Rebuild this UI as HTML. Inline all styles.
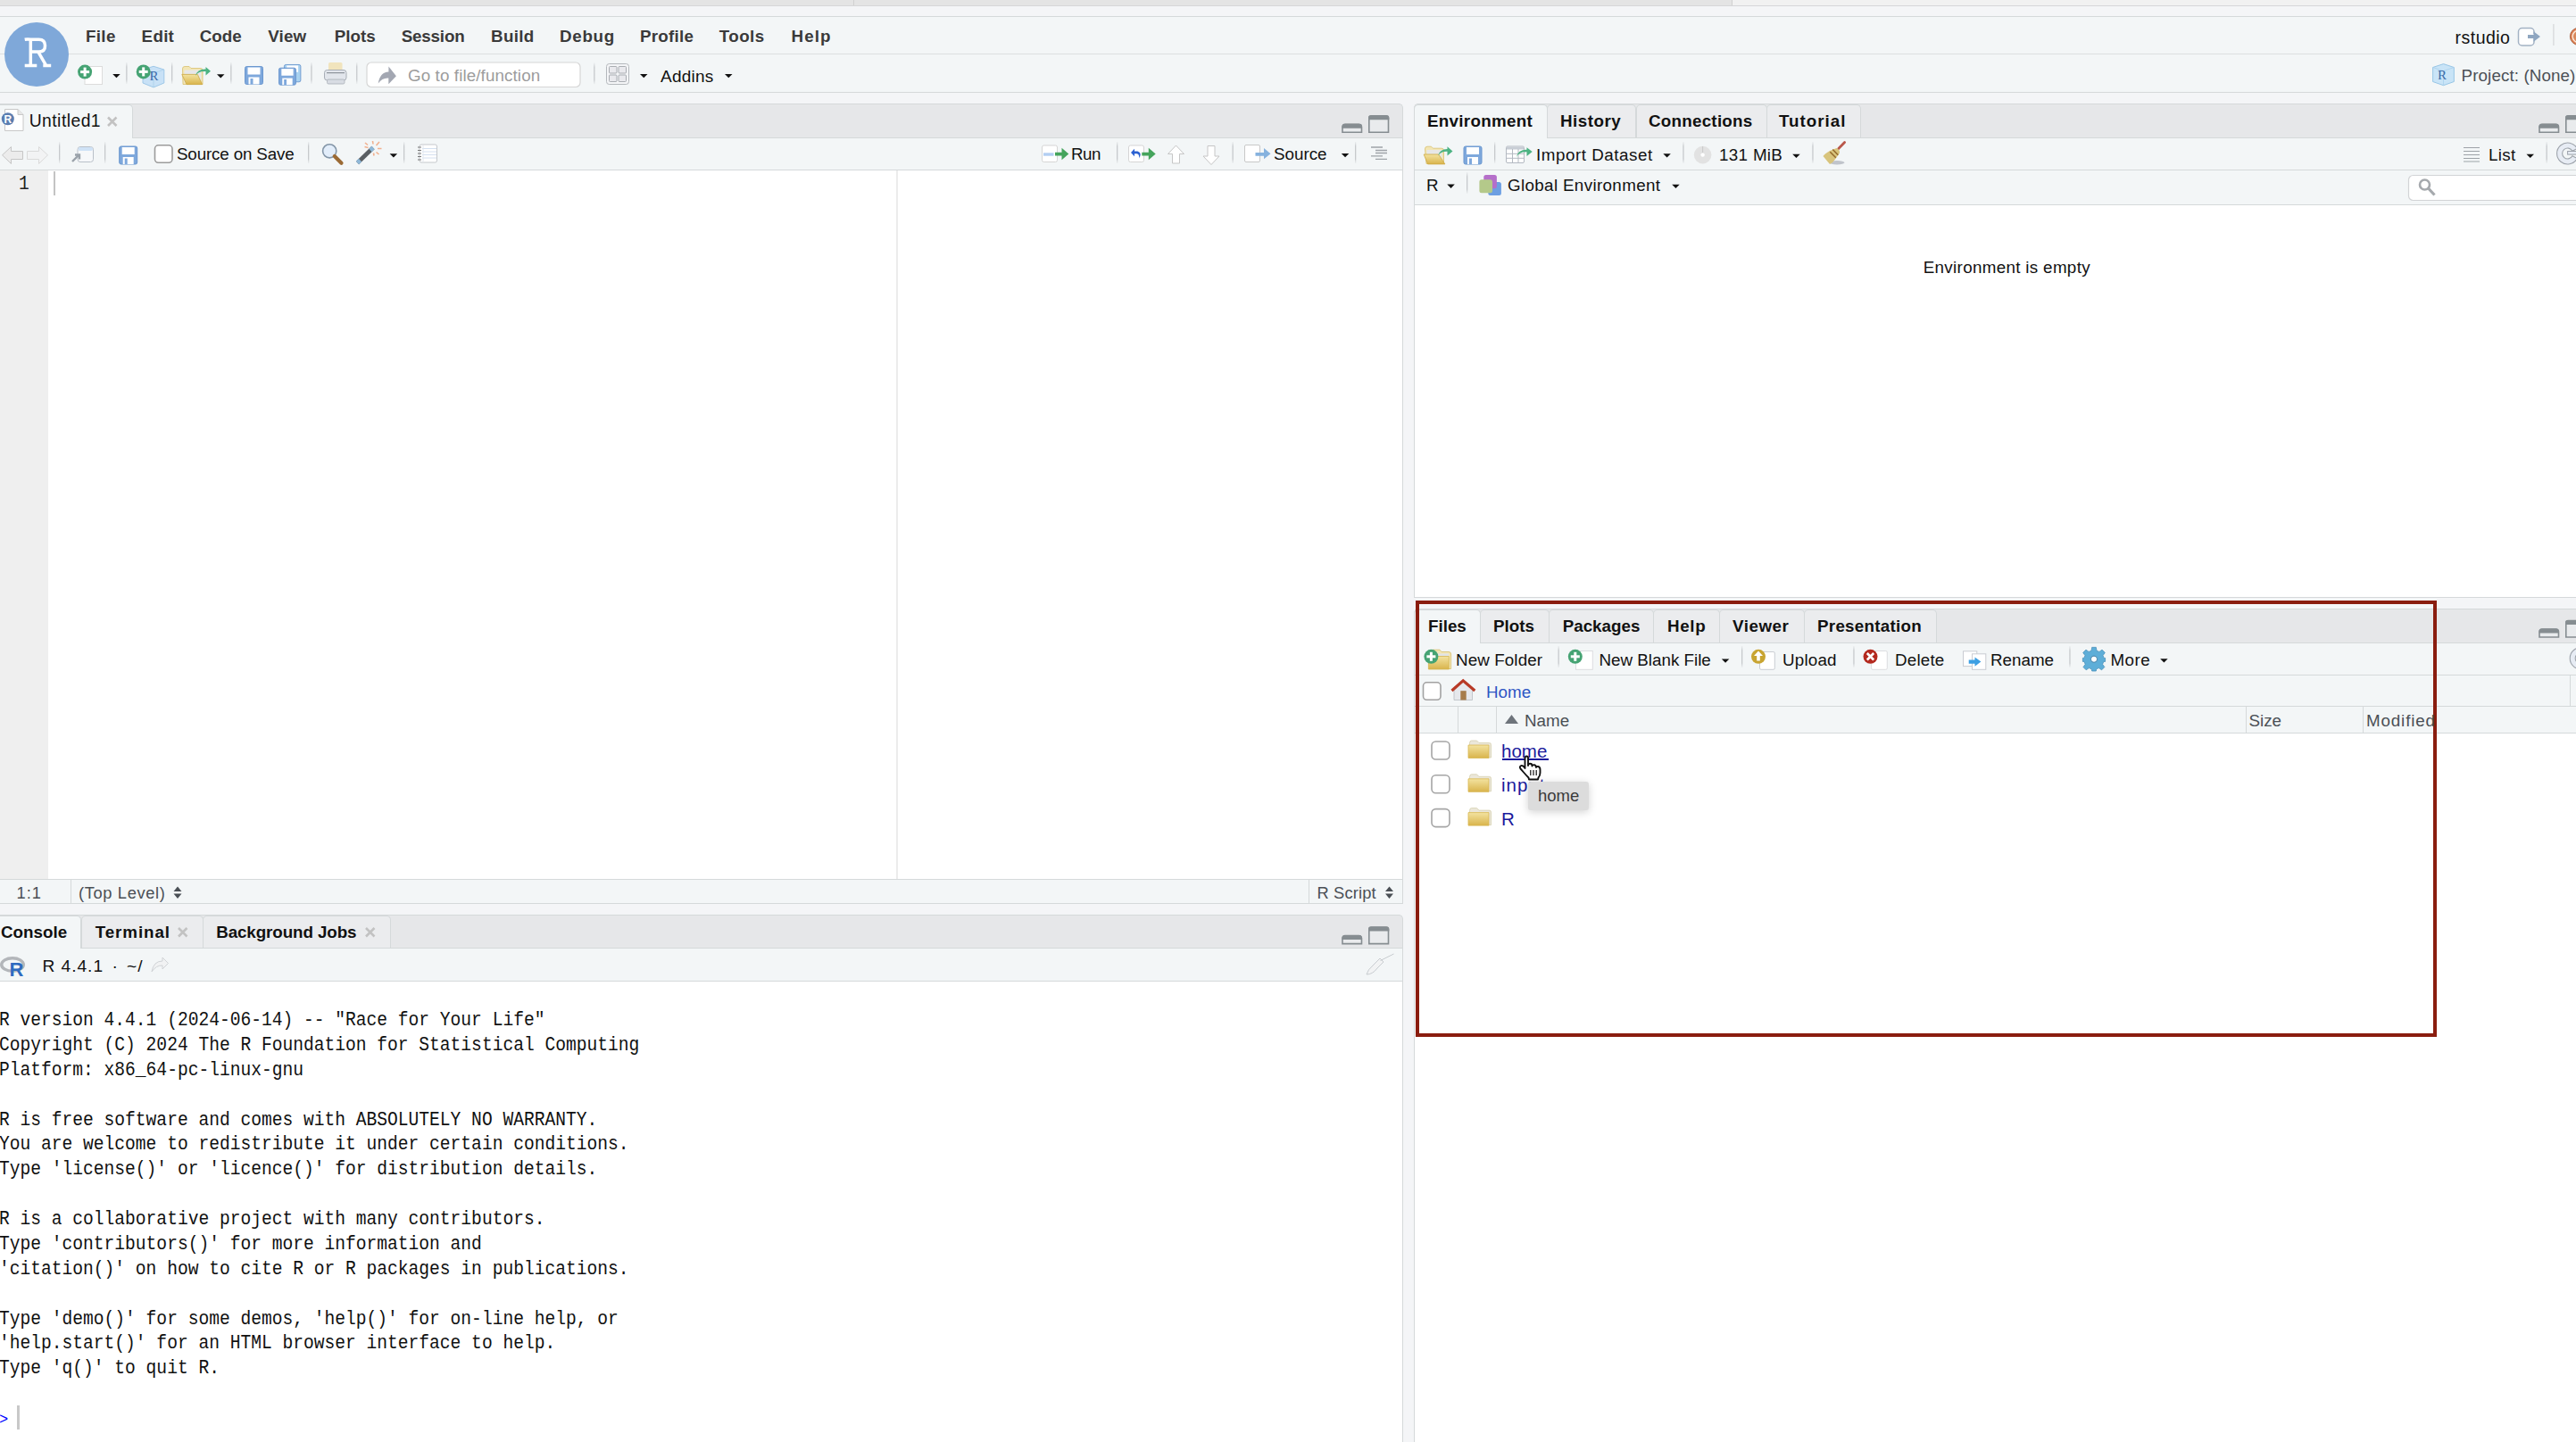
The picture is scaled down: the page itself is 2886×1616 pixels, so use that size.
<!DOCTYPE html>
<html><head><meta charset="utf-8">
<style>
*{margin:0;padding:0;box-sizing:border-box}
html,body{width:2886px;height:1616px;overflow:hidden;background:#f4f5f7;font-family:"Liberation Sans",sans-serif;color:#111}
.a{position:absolute}
.t{position:absolute;white-space:nowrap;line-height:1;font-size:18.8px}
.b{font-weight:bold}
.hl{position:absolute;height:1px;background:#d5d9da}
.vl{position:absolute;width:1px;background:#d5d9da}
.sep{position:absolute;width:1px;height:24px;background:#d3d6d8}
.dd{position:absolute;width:0;height:0;border-left:4.5px solid transparent;border-right:4.5px solid transparent;border-top:5px solid #111}
.tb{position:absolute;background:#f3f6f7}
.tabbar{position:absolute;background:#e6e7e9}
.tab{position:absolute;background:#ebecee;border-top-left-radius:5px;border-top-right-radius:5px;border:1px solid #d5d9da;border-bottom:none}
.tab.act{background:#f3f6f7}
.mono{font-family:"Liberation Mono",monospace}
.cb{position:absolute;width:21px;height:21px;border:2px solid #a2a2a2;border-radius:5px;background:#fff}
</style></head><body>

<!-- top chrome -->
<div class="a" style="left:0;top:0;width:2886px;height:7px;background:#e4e4e4"></div>
<div class="a" style="left:1941px;top:0;width:945px;height:7px;background:#f1f1f1"></div>
<div class="vl" style="left:956px;top:0;height:7px;background:#d0d0d0"></div>
<div class="vl" style="left:1940px;top:0;height:7px;background:#d0d0d0"></div>
<div class="hl" style="left:0;top:6px;width:2886px;background:#d6d6d8"></div>
<div class="a" style="left:0;top:7px;width:2886px;height:11px;background:#f4f5f7"></div>
<div class="hl" style="left:0;top:18px;width:2886px"></div>
<div class="tb" style="left:0;top:19px;width:2886px;height:84px"></div>
<div class="hl" style="left:0;top:60px;width:2886px;background:#dcdfe0"></div>
<div class="hl" style="left:0;top:103px;width:2886px"></div>


<!-- ============ LEFT EDITOR PANE ============ -->
<div class="tabbar" style="left:0;top:116px;width:1572px;height:39px;border-top:1px solid #d5d9da;border-right:1px solid #d5d9da;border-top-right-radius:5px"></div>
<div class="tab act" style="left:-1px;top:117px;width:150px;height:38px;border-left:none;border-top-left-radius:0"></div>
<div class="hl" style="left:148px;top:154px;width:1423px"></div>
<div class="tb" style="left:0;top:155px;width:1571px;height:35px"></div>
<div class="hl" style="left:0;top:190px;width:1571px"></div>
<div class="a" style="left:0;top:191px;width:54px;height:795px;background:#efefef"></div>
<div class="a" style="left:54px;top:191px;width:1517px;height:795px;background:#fff"></div>
<div class="a" style="left:1004px;top:191px;width:2px;height:795px;background:#ececec"></div>
<div class="a" style="left:60px;top:192px;width:2px;height:27px;background:#c4c4c4"></div>
<div class="hl" style="left:0;top:985px;width:1571px"></div>
<div class="tb" style="left:0;top:986px;width:1571px;height:26px"></div>
<div class="hl" style="left:0;top:1012px;width:1572px"></div>
<div class="vl" style="left:1571px;top:125px;height:888px"></div>
<div class="vl" style="left:79px;top:986px;height:26px"></div>
<div class="vl" style="left:1466px;top:986px;height:26px"></div>

<!-- ============ CONSOLE PANE ============ -->
<div class="tabbar" style="left:0;top:1025px;width:1572px;height:38px;border-top:1px solid #d5d9da;border-right:1px solid #d5d9da;border-top-right-radius:5px"></div>
<div class="tab act" style="left:-1px;top:1026px;width:92px;height:37px;border-left:none;border-top-left-radius:0"></div>
<div class="tab" style="left:91px;top:1026px;width:137px;height:37px"></div>
<div class="tab" style="left:227px;top:1026px;width:211px;height:37px"></div>
<div class="hl" style="left:91px;top:1062px;width:1480px"></div>
<div class="tb" style="left:0;top:1063px;width:1571px;height:36px"></div>
<div class="hl" style="left:0;top:1099px;width:1571px"></div>
<div class="a" style="left:0;top:1100px;width:1571px;height:516px;background:#fff"></div>
<div class="vl" style="left:1571px;top:1034px;height:582px"></div>

<!-- ============ ENV PANE ============ -->
<div class="tabbar" style="left:1584px;top:116px;width:1302px;height:39px;border-top:1px solid #d5d9da;border-left:1px solid #d5d9da;border-top-left-radius:5px"></div>
<div class="tab act" style="left:1584px;top:117px;width:150px;height:38px"></div>
<div class="tab" style="left:1733px;top:117px;width:100px;height:38px"></div>
<div class="tab" style="left:1833px;top:117px;width:147px;height:38px"></div>
<div class="tab" style="left:1979px;top:117px;width:106px;height:38px"></div>
<div class="hl" style="left:1733px;top:154px;width:1153px"></div>
<div class="tb" style="left:1585px;top:155px;width:1301px;height:74px"></div>
<div class="hl" style="left:1585px;top:190px;width:1301px"></div>
<div class="hl" style="left:1585px;top:229px;width:1301px"></div>
<div class="a" style="left:1585px;top:230px;width:1301px;height:439px;background:#fff"></div>
<div class="hl" style="left:1584px;top:669px;width:1302px"></div>
<div class="vl" style="left:1584px;top:125px;height:545px"></div>

<!-- ============ FILES PANE ============ -->
<div class="tabbar" style="left:1584px;top:682px;width:1302px;height:39px;border-top:1px solid #d5d9da;border-left:1px solid #d5d9da;border-top-left-radius:5px"></div>
<div class="tab act" style="left:1584px;top:683px;width:75px;height:38px"></div>
<div class="tab" style="left:1658px;top:683px;width:78px;height:38px"></div>
<div class="tab" style="left:1735px;top:683px;width:118px;height:38px"></div>
<div class="tab" style="left:1852px;top:683px;width:75px;height:38px"></div>
<div class="tab" style="left:1926px;top:683px;width:96px;height:38px"></div>
<div class="tab" style="left:2021px;top:683px;width:149px;height:38px"></div>
<div class="hl" style="left:1658px;top:720px;width:1228px"></div>
<div class="tb" style="left:1585px;top:721px;width:1301px;height:101px"></div>
<div class="hl" style="left:1585px;top:756px;width:1301px"></div>
<div class="hl" style="left:1585px;top:791px;width:1301px"></div>
<div class="hl" style="left:1585px;top:821px;width:1301px"></div>
<div class="vl" style="left:2879px;top:757px;height:34px"></div>
<div class="vl" style="left:1633px;top:792px;height:29px"></div>
<div class="vl" style="left:1676px;top:792px;height:29px"></div>
<div class="vl" style="left:2516px;top:792px;height:29px"></div>
<div class="vl" style="left:2647px;top:792px;height:29px"></div>
<div class="a" style="left:1585px;top:822px;width:1301px;height:794px;background:#fff"></div>
<div class="vl" style="left:1584px;top:691px;height:925px"></div>

<!-- red highlight -->
<div class="a" style="left:1586px;top:673px;width:1144px;height:489px;border:4px solid #8a1d0f"></div>


<svg class="a" style="left:0;top:0" width="2886" height="1616" viewBox="0 0 2886 1616">
<defs>
  <linearGradient id="fy" x1="0" y1="0" x2="0" y2="1"><stop offset="0" stop-color="#f3e3a0"/><stop offset="1" stop-color="#d9b44c"/></linearGradient>
  <g id="plus"><circle cx="0" cy="0" r="8" fill="#45a373"/><rect x="-5" y="-1.5" width="10" height="3" fill="#fff"/><rect x="-1.5" y="-5" width="3" height="10" fill="#fff"/></g>
  <g id="dd"><path d="M0 0 L8.5 0 L4.25 4.3 Z" fill="#111"/></g>
  <g id="floppy"><rect x="0.5" y="0.5" width="20" height="20" rx="2" fill="#7ea8dc" stroke="#6b97cf" stroke-width="1"/><rect x="3.5" y="1.5" width="14" height="8" fill="#fff"/><rect x="4.5" y="12.5" width="12" height="8" fill="#fff"/><rect x="6.5" y="14" width="3" height="6.5" fill="#7ea8dc"/></g>
  <g id="minmax"><path d="M1 19 L1 13 Q1 10 4 10 L19.5 10 Q22.5 10 22.5 13 L22.5 19 Z" fill="#e9ebed" stroke="#868d91" stroke-width="1.6"/><path d="M0.5 14.5 L0.5 13 Q0.5 9.5 4 9.5 L19.5 9.5 Q23 9.5 23 13 L23 14.5 Z" fill="#868d91"/>
    <path d="M30.8 19 L30.8 3 Q30.8 0.5 33.3 0.5 L50 0.5 Q52.5 0.5 52.5 3 L52.5 19 Z" fill="#e9ebed" stroke="#868d91" stroke-width="1.6"/><path d="M30 5 L30 3 Q30 0 33 0 L50.3 0 Q53.3 0 53.3 3 L53.3 5 Z" fill="#868d91"/></g>
  <linearGradient id="sg" x1="0" y1="0" x2="0" y2="1"><stop offset="0" stop-color="#cdd0d3" stop-opacity="0.2"/><stop offset="0.2" stop-color="#c6c9cc"/><stop offset="0.8" stop-color="#c6c9cc"/><stop offset="1" stop-color="#cdd0d3" stop-opacity="0.2"/></linearGradient>
  <g id="sepv"><rect x="0" y="0" width="1.3" height="24" fill="url(#sg)"/></g>
  <g id="folder"><path d="M1 3.5 Q1 1 3 1 L9 1 L11 3 L24 3 Q25.5 3 25.5 4.5 L25.5 20 L1 20 Z" fill="#f0dc96" stroke="#d8c070" stroke-width="0.8"/><rect x="3" y="5" width="21" height="14" fill="#e4e4e6"/><path d="M0.5 8.5 L25 8.5 L25.5 20.5 L1 20.5 Z" fill="url(#fy)" stroke="#cfae48" stroke-width="0.8"/></g>
  <g id="dirfold"><path d="M2 5 Q2 2 4 2 L10 2 L12.5 4.5 L24 4.5 Q26 4.5 26 6.5 L26 21 L2 21 Z" fill="#ebe7da" stroke="#d6cfae" stroke-width="0.8"/><path d="M0.5 7 L23.5 7 L23.5 21.5 L0.5 21.5 Z" fill="url(#fy)" stroke="#d9b850" stroke-width="0.8"/></g>
</defs>

<!-- R logo -->
<circle cx="41" cy="61" r="36" fill="#7fa8d9"/>
<path d="M34.3 44.8 V73 M27.7 44.2 Q31 43.6 34.3 44.2 H43.5 Q50.5 44.2 50.5 51.2 Q50.5 58.1 43.5 58.1 H34.3 M42.8 58.1 L51.8 73.6 M27.7 73.6 H41.3 M48.3 73.6 H57.2" fill="none" stroke="#fff" stroke-width="3.5"/>

<!-- main toolbar -->
<rect x="95" y="74.5" width="19.5" height="20" fill="#fff" stroke="#dcdcdc" stroke-width="1"/>
<use href="#plus" x="95.1" y="80.6"/>
<use href="#dd" x="126.2" y="83"/>
<use href="#sepv" x="141.2" y="70"/>
<path d="M172 74.3 L183.8 78 L183.8 93 L172 97.9 L160 93 L160 78 Z" fill="#c8e1f6" stroke="#9fc8e8" stroke-width="1"/>
<path d="M160 78 L172 82 L183.8 78 M172 82 L172 97.9" fill="none" stroke="#a9cfea" stroke-width="0.8"/>
<text x="167.5" y="90" font-family="Liberation Serif" font-size="15" fill="#3a6aa8">R</text>
<use href="#plus" x="160.7" y="80.4"/>
<use href="#sepv" x="192" y="70"/>
<path d="M204.5 77 Q204.5 74.5 207 74.5 L212 74.5 L214 76.5 L225 76.5 Q227 76.5 227 78.5 L227 94.5 L205 94.5 Z" fill="#f3e6b4" stroke="#d8c070" stroke-width="0.8"/>
<rect x="206.5" y="78.5" width="19" height="14" fill="#e7e7e7"/>
<path d="M203.8 83.4 L221.3 83.4 L226.6 94.6 L209 94.6 Z" fill="url(#fy)" stroke="#cda842" stroke-width="0.8"/>
<path d="M219 85 Q222 79.5 230.5 80 L230.5 84.5 L236 79.8 L230.5 75 L230.5 77.5 Q221 77 219 85 Z" fill="#4db383"/>
<use href="#dd" x="243" y="83.2"/>
<use href="#sepv" x="258.2" y="70"/>
<use href="#floppy" x="274" y="74"/>
<g transform="translate(318,72) scale(0.92)"><rect x="0.5" y="0.5" width="20" height="21" rx="2" fill="#a9d2f0" stroke="#6b97cf" stroke-width="1"/><rect x="3.5" y="1.5" width="14" height="8" fill="#fff"/></g>
<g transform="translate(312,75.7) scale(0.95)"><use href="#floppy"/></g>
<use href="#sepv" x="348.3" y="70"/>
<rect x="368" y="70" width="15.5" height="13" rx="1.5" fill="#f1e4bd"/>
<rect x="363.5" y="78.5" width="24.5" height="11.5" rx="3" fill="#e2e6ec" stroke="#a8aeb6" stroke-width="1"/>
<rect x="366" y="81" width="20" height="1.2" fill="#8d939b"/>
<rect x="366.5" y="89" width="19.5" height="5" rx="1.5" fill="#d8dce3" stroke="#a8aeb6" stroke-width="0.8"/>
<use href="#sepv" x="399.1" y="70"/>
<rect x="411" y="70" width="239" height="27.5" rx="5" fill="#fff" stroke="#d6d6d6" stroke-width="1.2"/>
<path d="M435.4 74.4 L443.9 85.3 L435.3 94.2 L435.3 87.5 Q428 87 423.7 93.5 Q425.5 81 435.4 80.4 Z" fill="#a3a7b2"/>
<use href="#sepv" x="665.2" y="70.4"/>
<rect x="679.5" y="71.5" width="25" height="23" rx="3" fill="#f4f5f7" stroke="#b4b8bc" stroke-width="1"/>
<rect x="682.5" y="74.5" width="8.5" height="7.5" rx="1" fill="#e9e9ed" stroke="#a9adb2" stroke-width="1"/>
<rect x="693" y="74.5" width="8.5" height="7.5" rx="1" fill="#e9e9ed" stroke="#a9adb2" stroke-width="1"/>
<rect x="682.5" y="84" width="8.5" height="7.5" rx="1" fill="#e9e9ed" stroke="#a9adb2" stroke-width="1"/>
<rect x="693" y="84" width="8.5" height="7.5" rx="1" fill="#e9e9ed" stroke="#a9adb2" stroke-width="1"/>
<use href="#dd" x="717" y="83"/>
<use href="#dd" x="812" y="83"/>

<!-- editor tab -->
<path d="M5.5 122.5 L20 122.5 L26 128.5 L26 146.5 L5.5 146.5 Z" fill="#fff" stroke="#c8c8c8" stroke-width="1"/>
<path d="M20 122.5 L20 128.5 L26 128.5" fill="#e6e6e6" stroke="#c8c8c8" stroke-width="1"/>
<circle cx="8.8" cy="133.3" r="7" fill="#5a7db0"/>
<text x="4.6" y="138.3" font-family="Liberation Sans" font-weight="bold" font-size="12" fill="#fff">R</text>
<path d="M121 131.5 L130.5 141 M130.5 131.5 L121 141" stroke="#c2c2c2" stroke-width="2.6"/>
<use href="#minmax" x="1503" y="129.2"/>

<!-- editor toolbar -->
<path d="M2.5 173.8 L12.5 164.5 L12.5 169.5 L25.5 169.5 L25.5 178.5 L12.5 178.5 L12.5 183.5 Z" fill="#ececec" stroke="#c6c6c6" stroke-width="1"/>
<path d="M53.5 173.8 L43.5 164.5 L43.5 169.5 L30.5 169.5 L30.5 178.5 L43.5 178.5 L43.5 183.5 Z" fill="#f2f3f4" stroke="#dadada" stroke-width="1"/>
<use href="#sepv" x="66" y="159"/>
<rect x="87" y="164.5" width="17.5" height="17" rx="3" fill="#f6f8fa" stroke="#b9c0c8" stroke-width="1"/>
<rect x="87.5" y="165" width="16.5" height="4" rx="2" fill="#cfe2f6"/>
<path d="M81 181 L88 174 M84 173.5 L89 173.5 L89 178.5" stroke="#9aa2aa" stroke-width="2.4" fill="none"/>
<use href="#sepv" x="117" y="159"/>
<use href="#floppy" x="133.2" y="163.5"/>
<rect x="173.5" y="162.8" width="19.5" height="19.5" rx="4" fill="#fff" stroke="#9c9c9c" stroke-width="1.6"/>
<use href="#sepv" x="345" y="159"/>
<circle cx="369.2" cy="169.3" r="7.6" fill="#e2edfa" stroke="#8496a8" stroke-width="1.6"/>
<path d="M374.8 175 L382.5 182.8" stroke="#9b6a35" stroke-width="4.2" stroke-linecap="round"/>
<path d="M400.5 182.5 L418 165.5" stroke="#5b5f63" stroke-width="4.6"/>
<path d="M400.5 182.5 L403.5 179.5 M415 168.5 L418 165.5" stroke="#8fb8d8" stroke-width="4.6"/>
<path d="M409 160 L412 162.5 M417.5 158 L418 161.5 M425 159 L421.5 163 M427.5 166.5 L423 166.5 M424.5 173 L421.5 170.5 M419 174.5 L418.5 171.5 M408.5 164.5 L412.5 165.5" stroke="#f1b08e" stroke-width="1.6"/>
<use href="#dd" x="436.6" y="172.3"/>
<use href="#sepv" x="452" y="159"/>
<rect x="470" y="162" width="19.5" height="20" rx="2" fill="#fff" stroke="#c5c8cc" stroke-width="1"/>
<path d="M473 166.5 H489 M473 170 H489 M473 173.5 H489 M473 177 H489" stroke="#d4e0f0" stroke-width="1"/>
<path d="M474 163 V182" stroke="#e3e8ee" stroke-width="1"/>
<path d="M468 165 h4 M468 168.5 h4 M468 172 h4 M468 175.5 h4 M468 179 h4" stroke="#777" stroke-width="1.2"/>

<rect x="1167.5" y="163" width="17" height="18.5" rx="2" fill="#fff" stroke="#d5d5d5" stroke-width="1"/>
<rect x="1169" y="171.3" width="11.5" height="3.4" fill="#b3cff2"/>
<path d="M1182 170.7 L1189.5 170.7 L1189.5 165.7 L1197.3 172.5 L1189.5 179.2 L1189.5 174.5 L1182 174.5 Z" fill="#45a45c"/>
<use href="#sepv" x="1251" y="159"/>
<rect x="1264.5" y="163" width="17" height="18.5" rx="2" fill="#fff" stroke="#d5d5d5" stroke-width="1"/>
<path d="M1276 177.5 Q1280 171.5 1274.5 169.5 L1271 169.5 L1271 166.8 L1267 171 L1271 175.2 L1271 172.3 L1274 172.3 Q1277 173.5 1276 177.5 Z" fill="#2c62d1"/>
<path d="M1279.3 170.7 L1286.8 170.7 L1286.8 165.7 L1294.7 172.5 L1286.8 179.2 L1286.8 174.5 L1279.3 174.5 Z" fill="#45a45c"/>
<path d="M1317.5 163 L1326.5 172.5 L1321.5 172.5 L1321.5 183 L1313.5 183 L1313.5 172.5 L1308.5 172.5 Z" fill="#fff" stroke="#c6c6c6" stroke-width="1"/>
<path d="M1357 184.5 L1366 175 L1361 175 L1361 163.5 L1353 163.5 L1353 175 L1348 175 Z" fill="#fff" stroke="#c6c6c6" stroke-width="1"/>
<use href="#sepv" x="1380.5" y="159"/>
<rect x="1394.5" y="162.5" width="17" height="19" rx="1.5" fill="#fff" stroke="#c8c8c8" stroke-width="1"/>
<path d="M1406.5 171 L1416 171 L1416 166 L1423.5 172.3 L1416 178.3 L1416 174.8 L1406.5 174.8 Z" fill="#86b2de"/>
<use href="#dd" x="1502.8" y="172"/>
<use href="#sepv" x="1518" y="159"/>
<path d="M1536 165 H1549 M1541 168.5 H1554 M1541 171.5 H1554 M1536 174.8 H1549 M1541 178.3 H1554" stroke="#9ea3a8" stroke-width="1.3"/>

<!-- status bar -->
<path d="M194.5 999 L199 993.5 L203.5 999 Z M194.5 1001.5 L199 1007 L203.5 1001.5 Z" fill="#4a4f55"/>
<path d="M1552 999 L1556.5 993.5 L1561 999 Z M1552 1001.5 L1556.5 1007 L1561 1001.5 Z" fill="#4a4f55"/>

<!-- console -->
<path d="M200 1040 L209.5 1049.5 M209.5 1040 L200 1049.5" stroke="#c2c2c2" stroke-width="2.6"/>
<path d="M410 1040 L419.5 1049.5 M419.5 1040 L410 1049.5" stroke="#c2c2c2" stroke-width="2.6"/>
<use href="#minmax" x="1503" y="1038.6"/>
<ellipse cx="14" cy="1081" rx="12.3" ry="7.3" fill="none" stroke="#b3b6ba" stroke-width="3.4"/>
<text x="10.5" y="1093.7" font-family="Liberation Sans" font-weight="bold" font-size="22" fill="#2f6bc0">R</text>
<path d="M170 1089 Q172 1077 182 1077 L182 1073 L188.5 1079.5 L182 1086 L182 1082 Q175 1081.5 170 1089 Z" fill="#f1f2f3" stroke="#d0d3d6" stroke-width="1"/>
<path d="M1531 1092 Q1538 1092 1543 1085 L1550 1078 L1546 1074 L1539 1081 Q1532 1087 1531 1092 Z M1546.5 1076.5 L1561.5 1069" fill="#f2f3f4" stroke="#c8ccd0" stroke-width="1"/>

<!-- top right -->
<rect x="2821.5" y="31.5" width="17.5" height="19.5" rx="4" fill="#fff" stroke="#a3b2c4" stroke-width="1.5"/>
<rect x="2832" y="38" width="8" height="5" fill="#fff"/>
<path d="M2832 39 L2838.5 39 L2838.5 35.3 L2846 41 L2838.5 46.7 L2838.5 43 L2832 43 Z" fill="#8fa6c0"/>
<rect x="2860.3" y="27" width="1.2" height="24" fill="#d3d6d8"/>
<circle cx="2889" cy="40.8" r="9.6" fill="#df8458" stroke="#a8603f" stroke-width="1"/>
<circle cx="2889" cy="40.8" r="6.8" fill="#d98a5e" stroke="#fdf1e4" stroke-width="1.3"/>
<path d="M2737.5 71.6 L2749.3 75.5 L2749.3 91.5 L2737.5 95.7 L2725.6 91.5 L2725.6 75.5 Z" fill="#c9e4f7" stroke="#98c6e6" stroke-width="1"/>
<path d="M2725.6 75.5 L2737.5 79.5 L2749.3 75.5 M2737.5 79.5 L2737.5 95.7" fill="none" stroke="#a9d0ec" stroke-width="0.8"/>
<text x="2731" y="88.5" font-family="Liberation Serif" font-size="15" fill="#3a6aa8">R</text>

<!-- env pane -->
<use href="#minmax" x="2844" y="129.2"/>
<path d="M1596.5 167 Q1596.5 164.2 1599 164.2 L1603.5 164.2 L1605.5 166.2 L1615 166.2 Q1617.5 166.2 1617.5 168.5 L1617.5 183.5 L1598 183.5 Z" fill="#f3e6b4" stroke="#d8c070" stroke-width="0.8"/>
<rect x="1598.5" y="168" width="17" height="13" fill="#e7e7e7"/>
<path d="M1595.2 173 L1611.7 173 L1618.9 183.9 L1599.6 183.9 Z" fill="url(#fy)" stroke="#cda842" stroke-width="0.8"/>
<path d="M1611 174.5 Q1614 169.5 1621.5 169.8 L1621.5 174.5 L1627.5 169.5 L1621.5 164.3 L1621.5 167 Q1613 167 1611 174.5 Z" fill="#4db383"/>
<use href="#floppy" x="1639.5" y="163.5"/>
<use href="#sepv" x="1674" y="159"/>
<rect x="1687.5" y="164" width="20" height="18.5" rx="1.5" fill="#fff" stroke="#b3b9c1" stroke-width="1"/>
<rect x="1688" y="164.5" width="19" height="3" fill="#c8cdd5"/>
<path d="M1694.5 167 V182 M1701 167 V182 M1688 172.3 H1707 M1688 177.3 H1707" stroke="#b3b9c1" stroke-width="1"/>
<path d="M1698.7 176 Q1702 170 1710.5 170.3 L1710.5 175 L1716.7 170 L1710.5 165.2 L1710.5 167.8 Q1701 167.5 1698.7 176 Z" fill="#4db383"/>
<use href="#dd" x="1863.3" y="172.3"/>
<use href="#sepv" x="1885.3" y="159"/>
<circle cx="1907.6" cy="173.6" r="9.8" fill="#e2e2e2"/>
<circle cx="1907.6" cy="173.6" r="2.2" fill="#fff"/>
<path d="M1907.6 164 V171" stroke="#c9c9c9" stroke-width="1"/>
<use href="#dd" x="2008.2" y="172.7"/>
<use href="#sepv" x="2030.3" y="159"/>
<ellipse cx="2058" cy="182.3" rx="8.5" ry="2.2" fill="#b3b8bf" opacity="0.8"/>
<path d="M2066.6 159.6 L2059.8 166.6" stroke="#b9574a" stroke-width="2.8" stroke-linecap="round"/>
<path d="M2057.5 166 Q2061.5 167.5 2061 171.5 L2056 178.5 Q2053 183 2050 184 L2042.5 175 Q2044 172.5 2050 169 Z" fill="#d8c47c"/>
<path d="M2053.3 167.6 L2059.3 173.8 M2050.3 170.2 L2056.8 176.8" stroke="#93692b" stroke-width="1.5"/>
<path d="M2760 165.5 H2778 M2760 169.5 H2778 M2760 173.5 H2778 M2760 177.5 H2778 M2760 181 H2778" stroke="#9ea3a8" stroke-width="1.2"/>
<use href="#dd" x="2830.5" y="172.8"/>
<use href="#sepv" x="2852.5" y="159"/>
<path d="M2887.20 166.37 A12 12 0 1 0 2887.20 177.63 L2881.90 174.82 A6 6 0 1 1 2881.90 169.18 Z" fill="#e7ecf4" stroke="#9ca2aa" stroke-width="1.1"/><rect x="2876.6" y="169.5" width="14" height="3.6" fill="#e7ecf4" stroke="#9ca2aa" stroke-width="1"/>
<use href="#dd" x="1621.3" y="206.6"/>
<use href="#sepv" x="1643" y="193"/>
<rect x="1667.3" y="204" width="14.6" height="15" rx="2.5" fill="#6d9fe2"/>
<rect x="1662.3" y="196" width="14.6" height="15.2" rx="2.5" fill="#b56fca"/>
<rect x="1657.4" y="201.3" width="14.6" height="15" rx="2.5" fill="#b4c98a"/>
<use href="#dd" x="1873.2" y="206.8"/>
<rect x="2698.5" y="196.5" width="200" height="28" rx="5" fill="#fff" stroke="#d2d4d6" stroke-width="1.2"/>
<circle cx="2716.5" cy="207" r="5.5" fill="none" stroke="#a5a9ad" stroke-width="2.6"/>
<path d="M2720.5 211 L2727.5 218.5" stroke="#a5a9ad" stroke-width="3.2"/>

<!-- files pane -->
<use href="#minmax" x="2844" y="695"/>
<path d="M1602 731.5 Q1602 728.2 1605 728.2 L1613 728.2 L1615 730.5 L1623 730.5 Q1625.6 730.5 1625.6 733 L1625.6 749.5 L1602 749.5 Z" fill="#f3e6b4" stroke="#d6bd68" stroke-width="0.8"/>
<rect x="1604" y="732.5" width="19" height="4" fill="#e1e3e6"/>
<path d="M1600.4 735.5 L1623.3 735.5 L1623.3 750 L1600.4 750 Z" fill="url(#fy)" stroke="#d4b650" stroke-width="0.8"/>
<use href="#plus" x="1603.4" y="735.8"/>
<use href="#sepv" x="1745.5" y="724"/>
<rect x="1765.5" y="729.5" width="18.8" height="20.8" fill="#fff" stroke="#dcdde0" stroke-width="1"/>
<use href="#plus" x="1764.8" y="735.8"/>
<use href="#dd" x="1928.8" y="738.4"/>
<use href="#sepv" x="1951" y="724"/>
<rect x="1971.5" y="730.5" width="16.8" height="19.8" rx="1.5" fill="#fff" stroke="#c9ccd2" stroke-width="1"/>
<circle cx="1970" cy="735.8" r="8" fill="#c8a431"/>
<path d="M1970 729.5 L1975 735 L1971.8 735 L1971.8 740.5 L1968.2 740.5 L1968.2 735 L1965 735 Z" fill="#fff"/>
<use href="#sepv" x="2076.3" y="724"/>
<rect x="2096.5" y="729.5" width="17.8" height="20.8" rx="1.5" fill="#fff" stroke="#dcdde0" stroke-width="1"/>
<circle cx="2095.5" cy="735.8" r="8" fill="#b3291f"/>
<path d="M2091.8 732 L2099.2 739.5 M2099.2 732 L2091.8 739.5" stroke="#fff" stroke-width="2.6"/>
<rect x="2199.5" y="729.8" width="15.3" height="16.8" fill="#fff" stroke="#c9ccd2" stroke-width="1"/>
<rect x="2209.5" y="732.8" width="15.3" height="17.5" fill="#fff" stroke="#c9ccd2" stroke-width="1"/>
<path d="M2205.7 739.5 L2212.5 739.5 L2212.5 736.6 L2219.4 741.6 L2212.5 746.7 L2212.5 743.8 L2205.7 743.8 Z" fill="#3d9fe3"/>
<use href="#sepv" x="2318.3" y="724"/>
<g transform="translate(2346,738.7)">
<path d="M-2.3 -12.6 L2.3 -12.6 L3 -8.8 L5.9 -7.6 L9 -9.8 L12.3 -6.6 L10 -3.4 L11.2 -0.6 L12.6 -0.6 L12.6 3.4 L10.8 3.4 L9.6 6.4 L11.8 9.6 L8.6 12.8 L5.4 10.6 L2.6 11.8 L2.3 14 L-2.3 14 L-2.8 11.8 L-5.6 10.6 L-8.8 12.8 L-12 9.6 L-9.8 6.4 L-11 3.4 L-12.6 3.4 L-12.6 -0.6 L-11.2 -0.6 L-10 -3.4 L-12.3 -6.6 L-9 -9.8 L-5.9 -7.6 L-3 -8.8 Z" fill="#5eaed8" stroke="#4a92bb" stroke-width="0.8" transform="translate(0,-0.7)"/>
<circle cx="0" cy="0" r="3.6" fill="#fff" stroke="#3f7fa8" stroke-width="1"/>
</g>
<use href="#dd" x="2420.2" y="738.2"/>
<path d="M2901.80 732.17 A12 12 0 1 0 2901.80 743.43 L2896.50 740.62 A6 6 0 1 1 2896.50 734.98 Z" fill="#e7ecf4" stroke="#9ca2aa" stroke-width="1.1"/><rect x="2891.2" y="735.3" width="14" height="3.6" fill="#e7ecf4" stroke="#9ca2aa" stroke-width="1"/>

<rect x="1594.5" y="764.8" width="19.5" height="19.5" rx="4" fill="#fff" stroke="#a2a2a2" stroke-width="1.6"/>
<path d="M1629 770.5 L1639.2 762.5 L1649.5 770.5 L1649.5 784.5 L1629 784.5 Z" fill="#e6e8ec" stroke="#b9bdc3" stroke-width="0.8"/>
<rect x="1636.3" y="774.2" width="6.4" height="10.3" fill="#a77c4a"/>
<path d="M1626.5 774 L1639.2 762.8 L1652.3 774" fill="none" stroke="#b83a26" stroke-width="3.2"/>
<path d="M1686 811 L1693.5 801 L1701 811 Z" fill="#6e747b"/>

<rect x="1604" y="831" width="20" height="20" rx="4.5" fill="#fff" stroke="#a5a5a5" stroke-width="1.6"/>
<rect x="1604" y="868.8" width="20" height="20" rx="4.5" fill="#fff" stroke="#a5a5a5" stroke-width="1.6"/>
<rect x="1604" y="906.6" width="20" height="20" rx="4.5" fill="#fff" stroke="#a5a5a5" stroke-width="1.6"/>
<use href="#dirfold" x="1644.5" y="828"/>
<use href="#dirfold" x="1644.5" y="865.8"/>
<use href="#dirfold" x="1644.5" y="903.6"/>
</svg>

<!-- ============ TEXT ============ -->
<div class="t b" style="left:96.0px;top:32.0px;font-size:18.8px;color:#3a3a3a;letter-spacing:0.333px;">File</div>
<div class="t b" style="left:158.6px;top:32.0px;font-size:18.8px;color:#3a3a3a;letter-spacing:0.267px;">Edit</div>
<div class="t b" style="left:223.8px;top:32.0px;font-size:18.8px;color:#3a3a3a;">Code</div>
<div class="t b" style="left:300.2px;top:32.0px;font-size:18.8px;color:#3a3a3a;letter-spacing:0.167px;">View</div>
<div class="t b" style="left:374.8px;top:32.0px;font-size:18.8px;color:#3a3a3a;">Plots</div>
<div class="t b" style="left:449.8px;top:32.0px;font-size:18.8px;color:#3a3a3a;letter-spacing:-0.200px;">Session</div>
<div class="t b" style="left:550.0px;top:32.0px;font-size:18.8px;color:#3a3a3a;letter-spacing:0.350px;">Build</div>
<div class="t b" style="left:627.0px;top:32.0px;font-size:18.8px;color:#3a3a3a;letter-spacing:0.700px;">Debug</div>
<div class="t b" style="left:717.0px;top:32.0px;font-size:18.8px;color:#3a3a3a;letter-spacing:0.250px;">Profile</div>
<div class="t b" style="left:805.8px;top:32.0px;font-size:18.8px;color:#3a3a3a;letter-spacing:0.425px;">Tools</div>
<div class="t b" style="left:886.6px;top:32.0px;font-size:18.8px;color:#3a3a3a;letter-spacing:1.067px;">Help</div>
<div class="t" style="left:2750.6px;top:32.7px;font-size:19.5px;color:#111;letter-spacing:0.467px;">rstudio</div>
<div class="t" style="left:740.0px;top:76.2px;font-size:19px;color:#111;letter-spacing:0.220px;">Addins</div>
<div class="t" style="left:457.0px;top:76.0px;font-size:18.8px;color:#9c9c9c;letter-spacing:0.111px;">Go to file/function</div>
<div class="t" style="left:2757.6px;top:75.8px;font-size:18.8px;color:#4b5056;letter-spacing:0.100px;">Project: (None)</div>
<div class="t" style="left:32.7px;top:126.0px;font-size:19.3px;color:#111;letter-spacing:0.475px;">Untitled1</div>
<div class="t b" style="left:1599.0px;top:127.0px;font-size:18.8px;color:#111;letter-spacing:0.300px;">Environment</div>
<div class="t b" style="left:1748.0px;top:127.0px;font-size:18.8px;color:#111;letter-spacing:0.500px;">History</div>
<div class="t b" style="left:1847.0px;top:127.0px;font-size:18.8px;color:#111;letter-spacing:0.250px;">Connections</div>
<div class="t b" style="left:1993.0px;top:127.0px;font-size:18.8px;color:#111;letter-spacing:1.000px;">Tutorial</div>
<div class="t" style="left:198.0px;top:164.2px;font-size:18.8px;color:#111;letter-spacing:-0.154px;">Source on Save</div>
<div class="t" style="left:1200.0px;top:164.2px;font-size:18.8px;color:#111;letter-spacing:-0.500px;">Run</div>
<div class="t" style="left:1427.0px;top:164.2px;font-size:18.8px;color:#111;">Source</div>
<div class="t" style="left:1721.0px;top:164.7px;font-size:18.8px;color:#111;letter-spacing:0.538px;">Import Dataset</div>
<div class="t" style="left:1926.0px;top:164.7px;font-size:18.8px;color:#111;letter-spacing:0.333px;">131 MiB</div>
<div class="t" style="left:2788.0px;top:164.7px;font-size:18.8px;color:#111;letter-spacing:0.333px;">List</div>
<div class="t" style="left:1598.0px;top:199.0px;font-size:18.8px;color:#111;">R</div>
<div class="t" style="left:1689.0px;top:199.0px;font-size:18.8px;color:#111;letter-spacing:0.353px;">Global Environment</div>
<div class="t" style="left:2154.7px;top:291.0px;font-size:18.8px;color:#111;letter-spacing:0.332px;">Environment is empty</div>
<div class="t b" style="left:1600.0px;top:692.7px;font-size:18.8px;color:#111;">Files</div>
<div class="t b" style="left:1673.0px;top:692.7px;font-size:18.8px;color:#111;">Plots</div>
<div class="t b" style="left:1750.7px;top:692.7px;font-size:18.8px;color:#111;">Packages</div>
<div class="t b" style="left:1868.0px;top:692.7px;font-size:18.8px;color:#111;letter-spacing:0.667px;">Help</div>
<div class="t b" style="left:1941.0px;top:692.7px;font-size:18.8px;color:#111;letter-spacing:0.540px;">Viewer</div>
<div class="t b" style="left:2036.0px;top:692.7px;font-size:18.8px;color:#111;letter-spacing:0.273px;">Presentation</div>
<div class="t" style="left:1631.0px;top:731.0px;font-size:18.8px;color:#111;letter-spacing:0.111px;">New Folder</div>
<div class="t" style="left:1791.5px;top:731.0px;font-size:18.8px;color:#111;">New Blank File</div>
<div class="t" style="left:1997.0px;top:731.0px;font-size:18.8px;color:#111;letter-spacing:0.200px;">Upload</div>
<div class="t" style="left:2123.0px;top:731.0px;font-size:18.8px;color:#111;letter-spacing:0.200px;">Delete</div>
<div class="t" style="left:2230.0px;top:731.0px;font-size:18.8px;color:#111;">Rename</div>
<div class="t" style="left:2364.5px;top:731.0px;font-size:18.8px;color:#111;letter-spacing:0.433px;">More</div>
<div class="t" style="left:1665.0px;top:767.0px;font-size:18.8px;color:#2d55c4;">Home</div>
<div class="t" style="left:1708.0px;top:799.0px;font-size:18.8px;color:#4a4f55;">Name</div>
<div class="t" style="left:2519.5px;top:799.0px;font-size:18.8px;color:#4a4f55;">Size</div>
<div class="t" style="left:2651.0px;top:799.0px;font-size:18.8px;color:#4a4f55;letter-spacing:0.857px;">Modified</div>
<div class="t" style="left:1682.0px;top:831.8px;font-size:20.5px;color:#1a1a9c;">home</div>
<div class="t" style="left:1682.0px;top:869.7px;font-size:20.5px;color:#1a1a9c;letter-spacing:1px">input</div>
<div class="t" style="left:1682.0px;top:907.6px;font-size:20.5px;color:#1a1a9c;">R</div>
<div class="t" style="left:18.4px;top:992.0px;font-size:18.3px;color:#4a4f55;letter-spacing:1.100px;">1:1</div>
<div class="t" style="left:88.0px;top:992.0px;font-size:18.3px;color:#4a4f55;letter-spacing:0.640px;">(Top Level)</div>
<div class="t" style="left:1475.5px;top:992.0px;font-size:18.3px;color:#4a4f55;letter-spacing:0.157px;">R Script</div>
<div class="t b" style="left:1.0px;top:1035.8px;font-size:18.8px;color:#111;">Console</div>
<div class="t b" style="left:106.7px;top:1035.8px;font-size:18.8px;color:#111;letter-spacing:0.929px;">Terminal</div>
<div class="t b" style="left:242.2px;top:1035.8px;font-size:18.8px;color:#111;letter-spacing:-0.093px;">Background Jobs</div>
<div class="t" style="left:47.5px;top:1073.3px;font-size:19.2px;color:#111;letter-spacing:0.95px">R 4.4.1</div>
<div class="t" style="left:125.5px;top:1073.3px;font-size:19.2px;color:#111;">·</div>
<div class="t" style="left:142px;top:1073.3px;font-size:19.2px;color:#111;letter-spacing:1px">~/</div>
<pre class="a mono" style="left:-1px;top:1130px;font-size:19.6px;line-height:24.875px;color:#111;transform:scaleY(1.12);transform-origin:0 0">R version 4.4.1 (2024-06-14) -- "Race for Your Life"
Copyright (C) 2024 The R Foundation for Statistical Computing
Platform: x86_64-pc-linux-gnu

R is free software and comes with ABSOLUTELY NO WARRANTY.
You are welcome to redistribute it under certain conditions.
Type 'license()' or 'licence()' for distribution details.

R is a collaborative project with many contributors.
Type 'contributors()' for more information and
'citation()' on how to cite R or R packages in publications.

Type 'demo()' for some demos, 'help()' for on-line help, or
'help.start()' for an HTML browser interface to help.
Type 'q()' to quit R.</pre>
<div class="t mono" style="left:-1px;top:1577.5px;font-size:17px;line-height:24.875px;color:#0000ff;transform:scaleY(1.12);transform-origin:0 0">&gt;</div>
<div class="a" style="left:19px;top:1575px;width:3px;height:27px;background:#c8c8c8"></div>
<div class="t mono" style="left:21px;top:193.3px;font-size:19.6px;line-height:24.875px;color:#222;transform:scaleY(1.12);transform-origin:0 0">1</div>

<div class="a" style="left:1683px;top:850.2px;width:52px;height:1.5px;background:#1a1a9c"></div>
<!-- tooltip + cursor -->
<div class="a" style="left:1712px;top:876px;width:68px;height:32px;background:#dcdcdc;border-radius:3px;box-shadow:0 2px 10px rgba(0,0,0,0.18)"></div>
<div class="t" style="left:1723px;top:883px;font-size:18.5px;color:#3a3a3a">home</div>
<svg class="a" style="left:1700px;top:846px" width="30" height="30" viewBox="0 0 30 30">
<path d="M8.5 3.5 Q8.5 1.5 10.2 1.5 Q12 1.5 12 3.5 L12 12 Q12.5 9.5 14.5 9.8 Q16.5 10 16.5 12.5 Q17 10.8 19 11.2 Q21 11.6 21 14 Q21.5 12.6 23.2 13 Q25.5 13.5 25.5 16.5 L25.5 20 Q25.5 23.5 23.5 25.5 L23 27.5 L13 27.5 L12.5 25.5 Q10 23 7 19.5 L3.5 15.5 Q2 13.5 3.8 12.3 Q5.5 11.3 7.5 13.5 L8.5 15 Z" fill="#fff" stroke="#111" stroke-width="1.9" stroke-linejoin="round"/>
<path d="M14.8 17 V23 M18 17 V23 M21.2 17 V23" stroke="#111" stroke-width="1.2"/>
</svg>

</body></html>
